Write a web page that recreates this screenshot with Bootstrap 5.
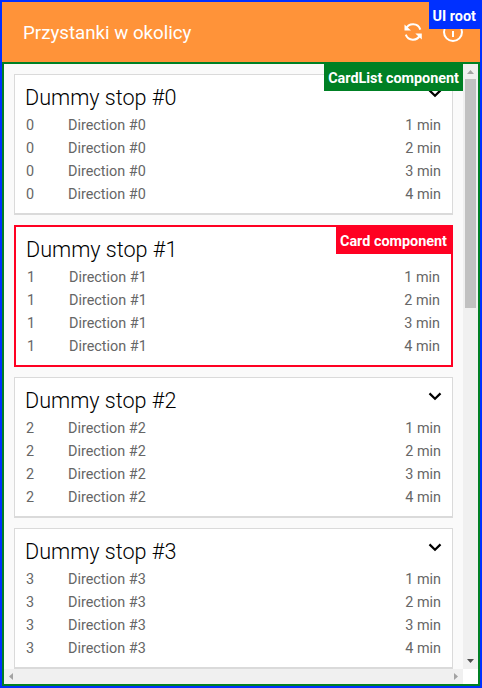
<!DOCTYPE html>
<html lang="pl">
<head>
<meta charset="utf-8">
<meta name="viewport" content="width=device-width, initial-scale=1">
<title>Przystanki w okolicy</title>
<link href="https://cdn.jsdelivr.net/npm/bootstrap@5.3.0/dist/css/bootstrap.min.css" rel="stylesheet">
<style>
body{font-family:Roboto,"Liberation Sans",sans-serif;overflow:hidden}
.ui-root{height:688px;border:2px solid #0030ff}
.app-bar{height:60px;background:#ff9339;color:#fff;padding:0 15px 0 21px;flex:none}
.app-title{font-size:18.72px;line-height:24px;padding-top:2px}
.app-icons{gap:16px}
.app-icons svg,.chevron{display:block}
.tag{position:absolute;top:0;right:0;height:27px;line-height:25px;padding:2px 4px 0;font-size:14.4px;font-weight:700;color:#fff;white-space:nowrap;z-index:2}
.tag-root{background:#0030ff}
.tag-list{background:#008024}
.tag-card{background:#ff0022}
.list-frame{border:2px solid #008024;background:#fafafa;min-height:0}
.list-view{padding:10px 10px 0;gap:10px;height:605px;overflow:hidden}
.stop-card{background:#fff;border:1px solid #dadada;border-bottom-width:2px;padding:7px 10px 7px;color:#666;font-size:14.4px;flex:none}
.stop-card.outlined{border:2px solid #ff0022}
.stop-title{font-size:21.6px;font-weight:300;line-height:31px;height:32px;color:#000;margin:0}
.stop-row{height:23px;line-height:23px;padding-right:1px}
.line-no{width:43px;padding-left:1px}
.vbar{width:15px;background:#f0f0f0;flex:none;height:605px}
.vthumb{width:11px;height:229px;background:#c1c1c1}
.hbar{height:15px;background:#f0f0f0;margin-right:15px}
.bottom-strip{background:#fff;height:15px}
</style>
</head>
<body>
<div class="ui-root position-relative d-flex flex-column">
  <span class="tag tag-root">UI root</span>
  <header class="app-bar d-flex align-items-center justify-content-between">
    <span class="app-title">Przystanki w okolicy</span>
    <div class="app-icons d-flex">
      <svg width="24" height="24" viewBox="0 0 24 24" fill="none" stroke="#fff" stroke-width="2"><path d="M5 9.2A7.6 7.6 0 0 1 19.3 9.6M19 15A7.6 7.6 0 0 1 4.8 14.6"/><path d="M3.5 4.5v6h6.5zM20.8 19.5v-6h-6.5z" fill="#fff" stroke="none"/></svg>
      <svg width="24" height="24" viewBox="0 0 24 24" fill="none" stroke="#fff" stroke-width="2"><circle cx="12" cy="12" r="9"/><path d="M12 11v6M12 7v2"/></svg>
    </div>
  </header>
  <main class="list-frame position-relative flex-grow-1">
    <div class="d-flex position-relative">
      <div class="list-view position-relative d-flex flex-column flex-grow-1" id="stops">
        <span class="tag tag-list">CardList component</span>
      </div>
      <div class="vbar d-flex flex-column align-items-center justify-content-between">
        <div>
          <svg class="d-block" width="11" height="15" viewBox="0 0 11 15"><path d="M2 10L5.5 6 9 10z" fill="#a3a3a3"/></svg>
          <div class="vthumb"></div>
        </div>
        <svg class="d-block" width="11" height="15" viewBox="0 0 11 15"><path d="M2 5L5.5 9 9 5z" fill="#505050"/></svg>
      </div>
    </div>
    <div class="bottom-strip">
      <div class="hbar d-flex justify-content-between">
        <svg width="15" height="15" viewBox="0 0 15 15"><path d="M9 4L5 7.5 9 11z" fill="#a3a3a3"/></svg>
        <svg width="15" height="15" viewBox="0 0 15 15"><path d="M6 4l4 3.5L6 11z" fill="#a3a3a3"/></svg>
      </div>
    </div>
  </main>
</div>
<script>
const list = document.getElementById('stops');
for (let n = 0; n < 4; n++) {
  const outlined = n === 1;
  const rows = [1, 2, 3, 4].map(m =>
    `<div class="stop-row d-flex"><span class="line-no">${n}</span><span>Direction #${n}</span><span class="ms-auto">${m} min</span></div>`).join('');
  list.insertAdjacentHTML('beforeend',
    `<article class="stop-card position-relative${outlined ? ' outlined' : ''}">
      ${outlined ? '<span class="tag tag-card">Card component</span>' : ''}
      <div class="d-flex justify-content-between">
        <h2 class="stop-title">Dummy stop #${n}</h2>
        <svg class="chevron" width="14" height="24" viewBox="0 0 14 24" fill="none" stroke="#000" stroke-width="2.2"><path d="M1.5 8.4L7 13.7l5.5-5.3"/></svg>
      </div>
      ${rows}
    </article>`);
}
</script>
<script src="https://cdn.jsdelivr.net/npm/bootstrap@5.3.0/dist/js/bootstrap.bundle.min.js"></script>
</body>
</html>
